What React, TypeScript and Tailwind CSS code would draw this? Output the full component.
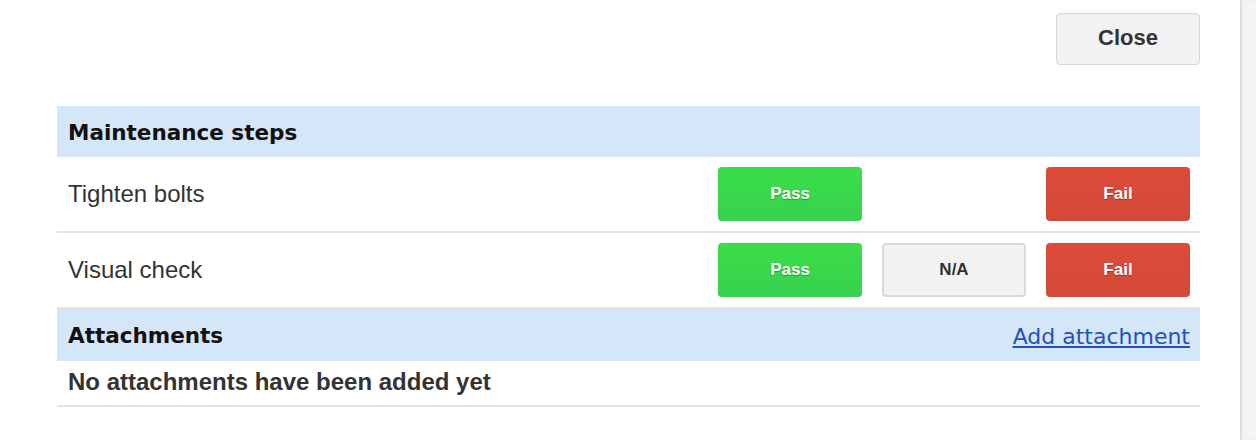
import React, { FC } from "react";

interface Step {
  name: string;
  na: boolean;
}

const steps: Step[] = [
  { name: "Tighten bolts", na: false },
  { name: "Visual check", na: true },
];

const sans = "font-['Liberation_Sans',Arial,sans-serif]";
const verdana = "font-['DejaVu_Sans',Verdana,sans-serif]";

const btn =
  "w-[144px] h-[54px] rounded-[4px] text-[17px] font-bold flex items-center justify-center";

const App: FC = () => {
  return (
    <div className="w-[1256px] h-[440px] flex bg-white overflow-hidden">
      <div className="flex-1 pl-[57px] pr-[40px] pt-[13px]">
        <div className="flex justify-end">
          <button
            className={`${sans} w-[144px] h-[52px] pb-[3px] bg-[#f2f2f2] border border-[#d6d6d6] rounded-[4px] text-[22px] font-bold text-[#333]`}
          >
            Close
          </button>
        </div>

        {/* Maintenance steps */}
        <div className="mt-[41px]">
          <div className="h-[51px] pt-[4px] bg-[#d5e6f8] flex items-center pl-[11px] pr-[10px]">
            <span className={`${verdana} text-[21.5px] font-bold text-[#111]`}>
              Maintenance steps
            </span>
          </div>
          {steps.map((s) => (
            <div
              key={s.name}
              className="flex items-center py-[10px] pl-[11px] pr-[10px] border-b-2 border-[#e3e3e3]"
            >
              <div className={`${sans} flex-1 text-[24px] text-[#333]`}>{s.name}</div>
              <div className={`${sans} flex gap-[20px]`}>
                <button
                  className={`${btn} bg-gradient-to-b from-[#3ade48] to-[#37d150] text-white [text-shadow:0_1px_1px_rgba(0,0,0,0.3)]`}
                >
                  Pass
                </button>
                {s.na ? (
                  <button className={`${btn} bg-[#f2f2f2] border-2 border-[#dadada] text-[#333]`}>
                    N/A
                  </button>
                ) : (
                  <div className="w-[144px]" />
                )}
                <button
                  className={`${btn} bg-gradient-to-b from-[#dd4a3a] to-[#d34a38] text-white [text-shadow:0_1px_1px_rgba(0,0,0,0.3)]`}
                >
                  Fail
                </button>
              </div>
            </div>
          ))}
        </div>

        {/* Attachments */}
        <div>
          <div className="h-[52px] pt-[2px] bg-[#d5e6f8] flex items-center justify-between pl-[11px] pr-[10px]">
            <span className={`${verdana} text-[21.5px] font-bold text-[#111]`}>Attachments</span>
            <a href="#" className={`${verdana} text-[22px] text-[#2152bd] underline`}>
              Add attachment
            </a>
          </div>
          <div
            className={`${sans} h-[46px] pb-[2px] flex items-center pl-[11px] border-b-2 border-[#e3e3e3] text-[24px] font-bold text-[#333]`}
          >
            No attachments have been added yet
          </div>
        </div>
      </div>
      <div className="w-[16px] h-full bg-[#f4f4f4] border-l border-[#d8d8d8] shadow-[inset_1px_0_2px_rgba(0,0,0,0.08)]" />
    </div>
  );
};

export default App;
